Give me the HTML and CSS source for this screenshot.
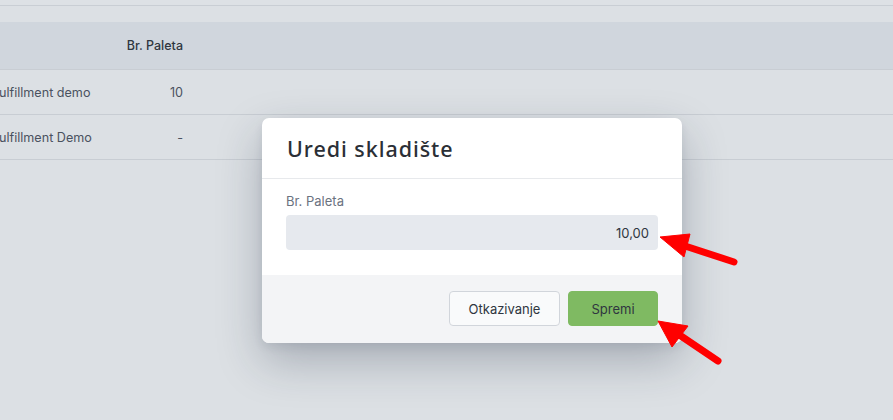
FILE: index.html
```html
<!DOCTYPE html>
<html lang="hr">
<head>
<meta charset="utf-8">
<title>Uredi skladište</title>
<link rel="stylesheet" href="styles.css">
</head>
<body>
<div class="page">
  <div class="topbar"></div>
  <div class="spacer"></div>
  <div class="table">
    <div class="row head">
      <div class="c-name"></div>
      <div class="c-num">Br. Paleta</div>
    </div>
    <div class="row">
      <div class="c-name">Fulfillment demo</div>
      <div class="c-num">10</div>
    </div>
    <div class="row">
      <div class="c-name">Fulfillment Demo</div>
      <div class="c-num">-</div>
    </div>
  </div>
</div>

<div class="modal">
  <div class="modal-head">Uredi skladište</div>
  <div class="modal-body">
    <label class="label">Br. Paleta</label>
    <div class="input">10,00</div>
  </div>
  <div class="modal-foot">
    <button class="btn btn-cancel">Otkazivanje</button>
    <button class="btn btn-save">Spremi</button>
  </div>
</div>

<svg class="arrows" width="893" height="420" viewBox="0 0 893 420">
  <g fill="#ff0000" stroke="#ff0000">
    <line x1="682" y1="245" x2="734" y2="262" stroke-width="7" stroke-linecap="round"/>
    <polygon points="660,237 690,234 684,257" stroke-width="1" stroke-linejoin="round"/>
    <line x1="678" y1="334" x2="718" y2="361" stroke-width="7" stroke-linecap="round"/>
    <polygon points="658,321 688,326 672,347" stroke-width="1" stroke-linejoin="round"/>
  </g>
</svg>
</body>
</html>
```
FILE: styles.css
```css
* { box-sizing: border-box; }
html, body { margin: 0; padding: 0; }
body {
  width: 893px;
  height: 420px;
  overflow: hidden;
  background: #dce0e4;
  font-family: Inter, "Liberation Sans", sans-serif;
  position: relative;
}
.page { width: 893px; overflow: hidden; }
.topbar {
  height: 6px;
  background: #dde1e5;
  border-bottom: 1px solid #c9ced4;
}
.spacer { height: 16px; }
.table { margin-left: -8px; }
.row {
  display: flex;
  align-items: center;
  height: 45px;
  border-bottom: 1px solid #c8cdd3;
  font-size: 12.6px;
  color: #4a5260;
  white-space: nowrap;
}
.row.head {
  height: 48px;
  background: #d0d6dd;
  font-size: 12.5px;
  font-weight: 500;
  color: #2f3640;
}
.c-name { width: 121px; }
.c-num { width: 70px; text-align: right; }

.modal {
  position: absolute;
  left: 262px;
  top: 118px;
  width: 420px;
  height: 225px;
  background: #ffffff;
  border-radius: 7px;
  overflow: hidden;
  box-shadow: 0 18px 45px rgba(30, 40, 60, 0.28), 0 4px 10px rgba(30, 40, 60, 0.08);
  display: flex;
  flex-direction: column;
}
.modal-head {
  height: 61px;
  padding: 0 25px;
  display: flex;
  align-items: center;
  border-bottom: 1px solid #e7e9ec;
  font-family: "Noto Sans", sans-serif;
  font-size: 21.5px;
  font-weight: 500;
  color: #2b2f36;
  letter-spacing: 0.95px;
}
.modal-body {
  padding: 14px 24px 25px;
  display: flex;
  flex-direction: column;
}
.label {
  font-size: 13px;
  color: #6b7280;
  line-height: 16px;
  margin-bottom: 6px;
}
.input {
  height: 35px;
  background: #e6e9ee;
  border-radius: 4px;
  display: flex;
  align-items: center;
  justify-content: flex-end;
  padding: 0 9px;
  font-size: 13px;
  color: #2f3640;
}
.modal-foot {
  flex: 1;
  background: #f3f4f6;
  display: flex;
  justify-content: flex-end;
  align-items: flex-start;
  gap: 8px;
  padding: 16px 24px;
}
.btn {
  height: 35px;
  border-radius: 4px;
  font-family: Inter, "Liberation Sans", sans-serif;
  font-size: 13px;
  color: #2f3640;
  padding: 0;
}
.btn-cancel {
  width: 111px;
  background: #f9fafb;
  border: 1px solid #d1d5db;
}
.btn-save {
  width: 90px;
  background: #7fba62;
  border: 1px solid #7fba62;
}
.arrows {
  position: absolute;
  left: 0;
  top: 0;
  pointer-events: none;
}
```
